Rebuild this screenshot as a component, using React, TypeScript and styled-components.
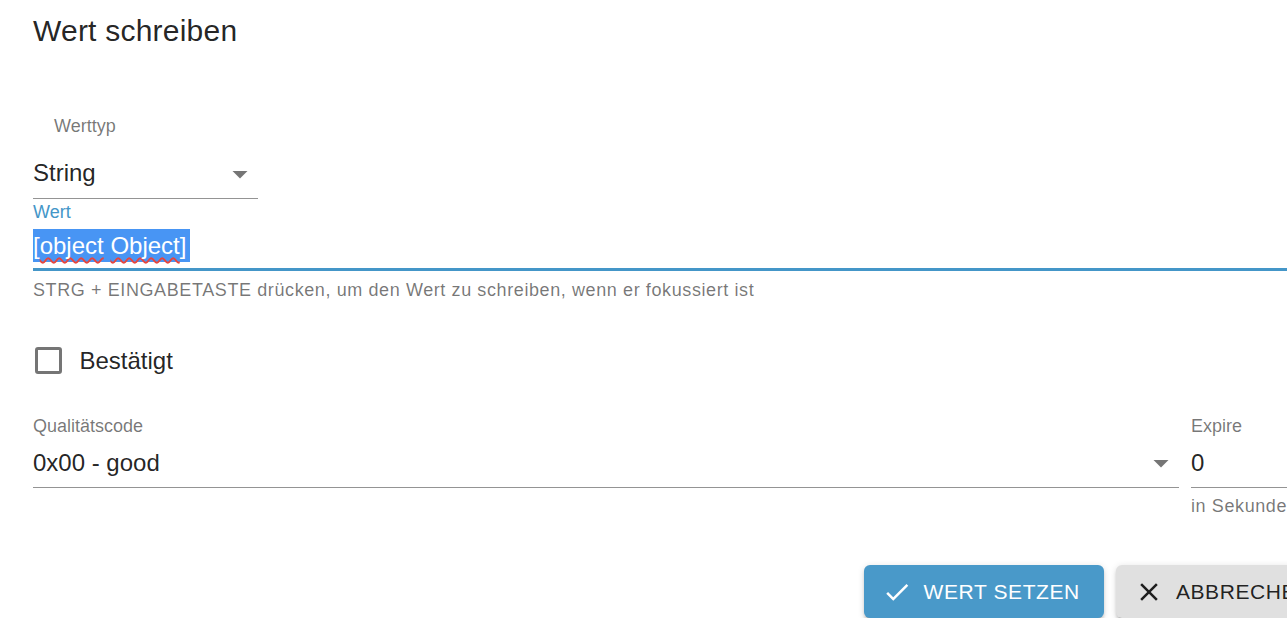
import React from "react";
import styled, { createGlobalStyle } from "styled-components";

const FONT = `"Liberation Sans", Arial, Helvetica, sans-serif`;

const Global = createGlobalStyle`
  html, body { margin: 0; padding: 0; background: #fff; overflow: hidden; }
  body { font-family: ${FONT}; }
  * { box-sizing: border-box; }
`;

const Dialog = styled.div`
  width: 1336px;
  padding: 7px 0 0 33px;
  display: flex;
  flex-direction: column;
`;

const Title = styled.h2`
  margin: 0;
  font-size: 30px;
  line-height: 48px;
  font-weight: 400;
  letter-spacing: 0.0075em;
  color: rgba(0, 0, 0, 0.87);
`;

const Field = styled.div<{ $mt?: number; $width?: number; $grow?: boolean }>`
  display: flex;
  flex-direction: column;
  margin-top: ${(p) => p.$mt ?? 0}px;
  ${(p) => (p.$width ? `width: ${p.$width}px; flex: none;` : "")}
  ${(p) => (p.$grow ? "flex: 1; min-width: 0;" : "")}
`;

const Label = styled.label<{ $focused?: boolean; $indent?: number; $lh?: number; $mt?: number }>`
  font-size: 18px;
  line-height: ${(p) => p.$lh ?? 27}px;
  margin-top: ${(p) => p.$mt ?? 0}px;
  padding-left: ${(p) => p.$indent ?? 0}px;
  color: ${(p) => (p.$focused ? "#4496c8" : "rgba(0, 0, 0, 0.54)")};
`;

const Control = styled.div<{ $mt: number; $pb: number; $focused?: boolean }>`
  display: flex;
  align-items: flex-start;
  margin-top: ${(p) => p.$mt}px;
  padding-bottom: ${(p) => p.$pb}px;
  border-bottom: ${(p) => (p.$focused ? "3px solid #4496c8" : "1px solid rgba(0, 0, 0, 0.42)")};
`;

const Value = styled.div<{ $lh?: number }>`
  flex: 1;
  font-size: 24px;
  line-height: ${(p) => p.$lh ?? 36}px;
  color: rgba(0, 0, 0, 0.87);
  white-space: nowrap;
`;

const Selected = styled.span`
  background: #4895f4;
  color: #fff;
  display: inline-block;
  padding-right: 4px;
`;

const Misspelled = styled.span`
  text-decoration: underline wavy #e8453c;
  text-decoration-thickness: 1.5px;
  text-underline-offset: 3px;
  text-decoration-skip-ink: none;
`;

const ArrowIcon = styled.svg<{ $mt?: number }>`
  width: 36px;
  height: 36px;
  flex: none;
  margin-top: ${(p) => p.$mt ?? 0}px;
  fill: rgba(0, 0, 0, 0.54);
`;

const Helper = styled.p<{ $mt: number }>`
  margin: ${(p) => p.$mt}px 0 0;
  font-size: 18px;
  line-height: 27px;
  letter-spacing: 0.03333em;
  color: rgba(0, 0, 0, 0.54);
  white-space: nowrap;
`;

const CheckRow = styled.label`
  display: flex;
  align-items: center;
  height: 63px;
  margin-top: 25px;
  cursor: pointer;
`;

const CheckBoxWrap = styled.span`
  width: 46.5px;
  height: 63px;
  display: flex;
  align-items: center;
  padding-left: 1.5px;
`;

const CheckBox = styled.span`
  width: 27px;
  height: 27px;
  border: 3px solid rgba(0, 0, 0, 0.54);
  border-radius: 3px;
`;

const CheckText = styled.span`
  font-size: 24px;
  line-height: 36px;
  color: rgba(0, 0, 0, 0.87);
`;

const Row = styled.div<{ $mt: number }>`
  display: flex;
  gap: 12px;
  margin-top: ${(p) => p.$mt}px;
`;

const Actions = styled.div`
  display: flex;
  justify-content: flex-end;
  gap: 12px;
  margin-top: 45px;
`;

const Button = styled.button<{ $primary?: boolean }>`
  display: flex;
  align-items: center;
  height: 53px;
  padding: 0 24px;
  border: none;
  border-radius: 6px;
  font-family: ${FONT};
  font-size: 21px;
  font-weight: 400;
  letter-spacing: 0.02857em;
  text-transform: uppercase;
  cursor: pointer;
  background: ${(p) => (p.$primary ? "#4999c9" : "#e0e0e0")};
  color: ${(p) => (p.$primary ? "#fff" : "rgba(0, 0, 0, 0.87)")};
  box-shadow: 0px 4.5px 1.5px -3px rgba(0, 0, 0, 0.2), 0px 3px 3px 0px rgba(0, 0, 0, 0.14),
    0px 1.5px 7.5px 0px rgba(0, 0, 0, 0.12);
  white-space: nowrap;
`;

const BtnIcon = styled.svg`
  width: 30px;
  height: 30px;
  margin: 0 12px 0 -6px;
  fill: currentColor;
  flex: none;
`;

const Arrow = ({ mt }: { mt?: number }) => (
  <ArrowIcon viewBox="0 0 24 24" $mt={mt}>
    <path d="M7 10l5 5 5-5z" />
  </ArrowIcon>
);

export default function App() {
  return (
    <>
      <Global />
      <Dialog>
        <Title>Wert schreiben</Title>

        <Field $mt={58} $width={225}>
          <Label $indent={21}>Werttyp</Label>
          <Control $mt={15} $pb={6}>
            <Value>String</Value>
            <Arrow mt={1} />
          </Control>
        </Field>

        <Field>
          <Label $focused $lh={18} $mt={4}>
            Wert
          </Label>
          <Control $mt={8} $pb={6} $focused>
            <Value $lh={33}>
              <Selected>
                [<Misspelled>object</Misspelled> <Misspelled>Object</Misspelled>]
              </Selected>
            </Value>
          </Control>
          <Helper $mt={6}>
            STRG + EINGABETASTE drücken, um den Wert zu schreiben, wenn er fokussiert ist
          </Helper>
        </Field>

        <CheckRow>
          <CheckBoxWrap>
            <CheckBox />
          </CheckBoxWrap>
          <CheckText>Bestätigt</CheckText>
        </CheckRow>

        <Row $mt={21}>
          <Field $grow>
            <Label>Qualitätscode</Label>
            <Control $mt={5} $pb={6}>
              <Value>0x00 - good</Value>
              <Arrow />
            </Control>
          </Field>
          <Field $width={145}>
            <Label>Expire</Label>
            <Control $mt={5} $pb={6}>
              <Value>0</Value>
            </Control>
            <Helper $mt={5}>in Sekunden</Helper>
          </Field>
        </Row>

        <Actions>
          <Button $primary>
            <BtnIcon viewBox="0 0 24 24">
              <path d="M9 16.17L4.83 12l-1.42 1.41L9 19 21 7l-1.41-1.41z" />
            </BtnIcon>
            Wert setzen
          </Button>
          <Button>
            <BtnIcon viewBox="0 0 24 24">
              <path d="M19 6.41L17.59 5 12 10.59 6.41 5 5 6.41 10.59 12 5 17.59 6.41 19 12 13.41 17.59 19 19 17.59 13.41 12z" />
            </BtnIcon>
            Abbrechen
          </Button>
        </Actions>
      </Dialog>
    </>
  );
}
